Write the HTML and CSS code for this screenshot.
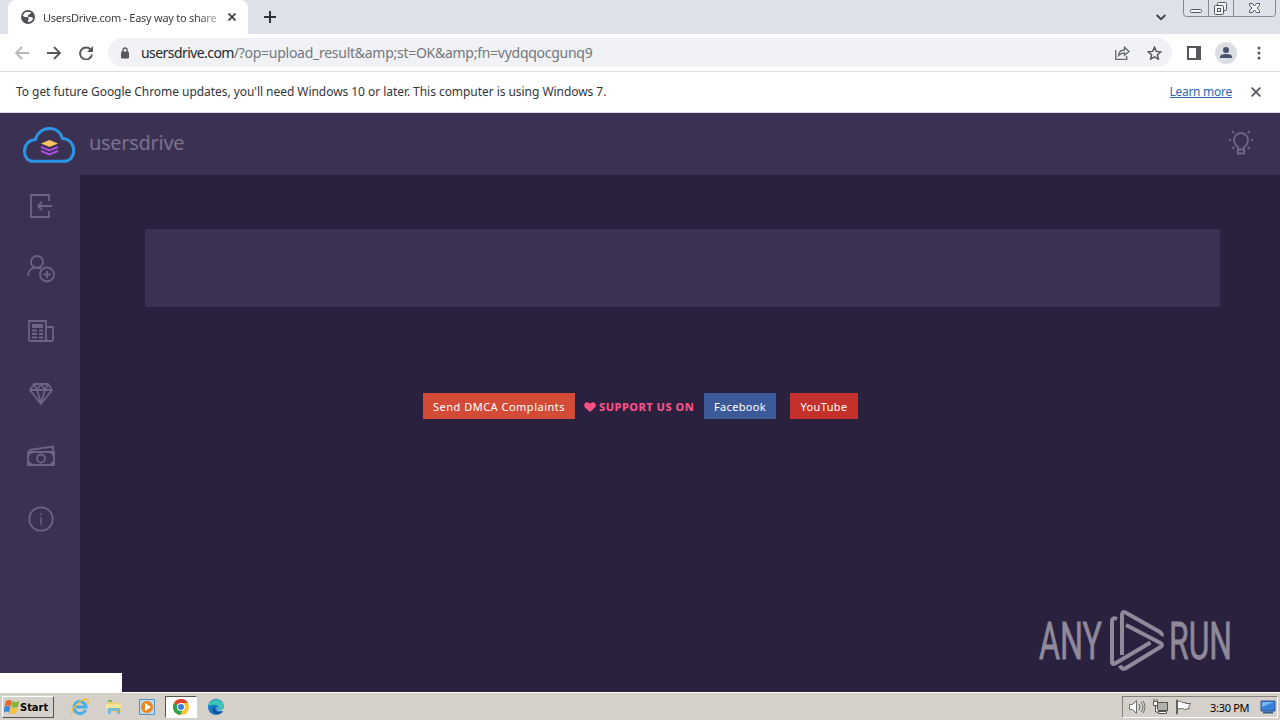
FILE: index.html
```html
<!DOCTYPE html>
<html lang="en">
<head>
  <meta charset="UTF-8" />
  <title>UsersDrive.com - Easy way to share</title>
  <link rel="stylesheet" href="styles.css">
</head>
<body>
  <div class="tabstrip">
    <div class="tab">
      <svg class="favicon" width="14" height="14" viewBox="0 0 14 14"><circle cx="7" cy="7" r="7" fill="#505357"/><path d="M6 2h4l-1 2-2 1v2H4l-2-1C2 4 4 2 6 2zM7 7h3l2 1c0 2-2 4-5 4v-2l1-1z" fill="#fff"/></svg>
      <span class="tab-title">UsersDrive.com - Easy way to share</span>
      <svg width="8" height="8" viewBox="0 0 8 8"><path d="M.5.5l7 7M7.500.5l-7 7" stroke="#3c4043" stroke-width="1.7"/></svg>
    </div>
    <svg class="new-tab" width="12" height="12" viewBox="0 0 12 12"><path d="M6 0v12M0 6h12" stroke="#2f3237" stroke-width="2"/></svg>
    <svg class="tab-search" width="10" height="7" viewBox="0 0 10 7"><path d="M.7 1L5 5.200 9.300 1" fill="none" stroke="#3c4043" stroke-width="1.800"/></svg>
    <div class="window-buttons">
      <svg width="93" height="17" viewBox="0 0 93 17" fill="none" stroke="#85888f">
        <path d="M.5 0v13.500q0 3 3 3h86q3 0 3-3V0M25.500 0v16M50.500 0v16"/>
        <g stroke="#55585e" fill="#f4f5f8"><rect x="7.500" y="9.500" width="11" height="3" rx="1"/><rect x="34.500" y="2.500" width="9" height="8" rx="1"/><rect x="31.500" y="5.500" width="9" height="9" rx="1"/><rect x="34.500" y="8.500" width="3" height="3"/><path d="M66.500 3.500h3l2 2.500 2-2.500h3v2l-2.500 2.500 2.500 2.500v2h-3l-2-2.500-2 2.500h-3v-2l2.500-2.500-2.500-2.500z"/></g>
      </svg>
    </div>
  </div>

  <div class="toolbar">
    <svg class="nav" width="14" height="14" viewBox="0 0 14 14"><path d="M14 7H1.500M7 1L1 7l6 6" fill="none" stroke="#b5b7ba" stroke-width="1.800"/></svg>
    <svg class="nav" width="14" height="14" viewBox="0 0 14 14"><path d="M0 7h12.500M7 1l6 6-6 6" fill="none" stroke="#55585d" stroke-width="1.800"/></svg>
    <svg class="nav" width="14" height="14" viewBox="0 0 14 14"><path d="M12 4A6 6 0 1 0 13 8.500" fill="none" stroke="#55585d" stroke-width="1.900"/><path d="M14 0v6H8z" fill="#55585d"/></svg>
    <div class="omnibox">
      <svg class="lock" width="8" height="12" viewBox="0 0 8 12"><path d="M2 5V3a2 2 0 0 1 4 0v2" fill="none" stroke="#55585d" stroke-width="1.400"/><rect y="4.500" width="8" height="7" rx="1" fill="#55585d"/></svg>
      <span class="url"><span class="host">usersdrive.com</span>/?op=upload_result&amp;amp;st=OK&amp;amp;fn=vydqqocgunq9</span>
      <svg class="share" width="15" height="14" viewBox="0 0 15 14" fill="none" stroke="#65686d" stroke-width="1.300"><path d="M.7 4v9.300h11V10"/><path d="M3.500 9.500c.5-4 3-5.500 6-5.500V1.200L14 5.500 9.500 9.300V7c-3 0-4.500 1-6 2.500z"/></svg>
      <svg class="star" width="15" height="14" viewBox="0 0 15 14"><path d="M7.500 1.200l1.800 4.200 4.500.4-3.400 3 1 4.300-3.900-2.300-3.900 2.300 1-4.300-3.400-3 4.500-.4z" fill="none" stroke="#55585d" stroke-width="1.500"/></svg>
    </div>
    <svg class="panel" width="14" height="14" viewBox="0 0 14 14"><path d="M0 0h14v14H0zM2 2v10h7V2z" fill="#55585d" fill-rule="evenodd"/></svg>
    <svg class="avatar" width="22" height="22" viewBox="0 0 22 22"><circle cx="11" cy="11" r="11" fill="#dadde2"/><circle cx="11" cy="8" r="3" fill="#49526b"/><path d="M5 16v-1.500q0-2.500 6-2.500t6 2.500V16z" fill="#49526b"/></svg>
    <svg class="menu" width="4" height="14" viewBox="0 0 4 14" fill="#55585d"><circle cx="2" cy="2" r="1.500"/><circle cx="2" cy="7" r="1.500"/><circle cx="2" cy="12" r="1.500"/></svg>
  </div>

  <div class="infobar">
    <span class="info-text">To get future Google Chrome updates, you'll need Windows 10 or later. This computer is using Windows 7.</span>
    <span class="learn-more">Learn more</span>
    <svg width="10" height="10" viewBox="0 0 10 10"><path d="M.7.7l8.600 8.600M9.300.7L.7 9.300" stroke="#55585d" stroke-width="1.800"/></svg>
  </div>

  <div class="page">
    <header class="header">
      <svg class="logo" width="54" height="38" viewBox="0 0 54 38">
        <path d="M11 35.300C6 35.300 2.500 31 2.500 25.500 2.500 19 6.500 14 13.500 13.500 15 7 20.500 2.500 27.500 2.500S39 7 40.500 12.500C48 13 51.700 18.500 51.700 24.500S48 35.300 42 35.300z" fill="none" stroke="#2d94e3" stroke-width="3"/>
        <path d="M27.500 14l8.500 3.500-8.500 3.500-8.500-3.500z" fill="#f9c560"/>
        <path d="M19 21l8.500 3.500L36 21M19 25l8.500 3.500L36 25" fill="none" stroke="#a950db" stroke-width="2"/>
      </svg>
      <span class="brand">usersdrive</span>
      <svg class="bulb" width="24" height="26" viewBox="0 0 24 26" fill="none" stroke="#716886" stroke-width="1.800">
        <path d="M9 19.500v-2.300C6.700 15.500 5 13.300 5 10a7 7 0 0 1 14 0c0 3.300-1.700 5.500-4 7.200v2.300z"/><path d="M8.800 19v4.500h6.400V19M3.200 1.200l2 2M20.800 1.200l-2 2M3.200 18.800l2-2M20.800 18.800l-2-2M0 10h2M22 10h2"/>
      </svg>
    </header>
    <div class="content">
      <nav class="sidebar">
        <div class="item"><svg width="22" height="24" viewBox="0 0 22 24"><path d="M19 7V1H1v22h18v-6M22 12H8M12 8l-4 4 4 4"/></svg></div>
        <div class="item"><svg width="28" height="28" viewBox="0 0 28 28"><circle cx="10" cy="7" r="6"/><path d="M1 21c0-5 3.500-8.500 8-8.500 2 0 3.500.4 5 1.500"/><circle cx="20" cy="19.500" r="7"/><path d="M20 16v7M16.500 19.500h7"/></svg></div>
        <div class="item"><svg width="26" height="22" viewBox="0 0 26 22"><path d="M18 18.500V1H1v18q0 2 2 2h20q2 0 2-2V7h-7M18 18q0 3 2.500 3"/><path d="M4 6h11" stroke-width="4"/><path d="M4 10.500h5M4 14h5M4 17.500h5M11 10.500h4M11 14h4M11 17.500h4"/></svg></div>
        <div class="item"><svg width="24" height="22" viewBox="0 0 24 22"><path d="M5 1h14l4 6-11 14L1 7zM1 7h22M5 1l3 6 4-6 4 6 3-6M8 7l4 13 4-13"/></svg></div>
        <div class="item"><svg width="28" height="22" viewBox="0 0 28 22"><path d="M1 7h26v13H1zM2 5L26 1.500V7"/><circle cx="14" cy="13.500" r="4"/><path d="M2 11V8h3M23 8h3v3M2 16v3h3M23 19h3v-3"/></svg></div>
        <div class="item"><svg width="26" height="26" viewBox="0 0 26 26"><circle cx="13" cy="13" r="11.700"/><path d="M13 7v2M13 11v8" stroke-width="1.300"/></svg></div>
      </nav>
      <main class="main">
        <div class="card"></div>
        <div class="footer">
          <span class="btn dmca">Send DMCA Complaints</span>
          <svg class="heart" width="12" height="10" viewBox="0 0 12 10"><path d="M6 10L1 5.500C-.8 3.500.5.3 3 .3 4.500.3 5.500 1 6 2 6.500 1 7.500.3 9 .3c2.500 0 3.800 3.200 2 5.200z" fill="#fa5085"/></svg>
          <span class="support">SUPPORT US ON</span>
          <span class="btn facebook">Facebook</span>
          <span class="btn youtube">YouTube</span>
        </div>
      </main>
    </div>
    <div class="status"></div>
    <svg class="watermark" width="200" height="64" viewBox="0 0 200 64">
      <g class="mark-text"><text x="1" y="50" textLength="63" lengthAdjust="spacingAndGlyphs">ANY</text><text x="131" y="50" textLength="63" lengthAdjust="spacingAndGlyphs">RUN</text></g>
      <g fill="none" stroke="#8f899a" stroke-width="4" stroke-linejoin="round"><path d="M79 10q-5-2-5 2v41q0 3 3 1.500l35.500-21"/><path d="M84 46V6q0-4 3.500-2.500L122 23q2.500 2 1.500 4"/><path d="M88 16l34.500 18q3 2 0 4L88 59q-4 2.500-6-2.500"/></g>
    </svg>
  </div>

  <div class="taskbar">
    <div class="start">
      <svg width="16" height="16" viewBox="0 0 16 16"><path d="M2 2q3-2 6 0L6.500 7.500Q4 5.500.5 7.500z" fill="#e9632d"/><path d="M8.500 2.300q3 1.500 7 0L13.700 8q-3 1.500-6.500-.3z" fill="#80b83b"/><path d="M.3 8q3-2 6 0L5 13.500q-3-2-5 0z" fill="#3c86d5"/><path d="M7 8.300q3 1.500 6.500.7L12 14.500q-3 1.500-6.500-.7z" fill="#f5c13c"/></svg>
      <span>Start</span>
    </div>
    <div class="launch">
      <svg width="18" height="18" viewBox="0 0 18 18"><path d="M14.500 12A6 6 0 1 1 15 9H5" fill="none" stroke="#46aee5" stroke-width="3"/><path d="M1 16C-1 11 13-2 17 2c1 1 0 3-1 4" fill="none" stroke="#eebb3d" stroke-width="1.500"/></svg>
      <svg width="18" height="18" viewBox="0 0 18 18"><path d="M2 3h5l1 2h8v9H2z" fill="#edcf6c"/><path d="M3 2h4v2H3z" fill="#78b95c"/><path d="M1 6h15v5H1z" fill="#f7e399"/><path d="M3 16v-6h12v6h-3v-3H6v3z" fill="#74b8dc"/></svg>
      <svg width="16" height="16" viewBox="0 0 16 16"><path d="M.5.5h15v15H.5z" fill="#b7daf1" stroke="#5992c2"/><circle cx="8" cy="8" r="6" fill="#ef8516"/><path d="M6 4l6 4-6 4z" fill="#fff"/></svg>
      <div class="active-app"><svg width="16" height="16" viewBox="0 0 16 16"><circle cx="8" cy="8" r="8" fill="#f6c52c"/><path d="M1 4a8 8 0 0 0 6 12l4-7-3-1z" fill="#2f9f50"/><path d="M1 4a8 8 0 0 1 14 0H8v4z" fill="#e04434"/><circle cx="8" cy="8" r="4" fill="#fff"/><circle cx="8" cy="8" r="3" fill="#3d7de5"/></svg></div>
      <svg width="16" height="16" viewBox="0 0 16 16"><circle cx="8" cy="8" r="8" fill="#1879c9"/><path d="M.3 7C1-1 16-2 16 8c0 3-5 4-6 2 2-3-2-6-9.700-3z" fill="#39c6b8"/><path d="M7 8c-1 5 4 6 8 4-2 4-9 4-10 0-.5-2 0-4 2-4z" fill="#0b5195"/><path d="M9 8c1 1 0 2 1 3 2 1 4 0 6-2v3h-4c-3 0-4-2-3-4z" fill="#d5d1ca"/></svg>
    </div>
    <div class="tray">
      <svg width="18" height="16" viewBox="0 0 18 16" fill="none" stroke="#707070"><path d="M1.500 5.500h3l4-4v13l-4-4h-3z" fill="#fff"/><path d="M11 5q2 3 0 6M13 3q4 5 0 10M15 2q4 6 0 12"/></svg>
      <svg width="17" height="16" viewBox="0 0 17 16" fill="#fff" stroke="#55534e"><rect x="5.500" y="3.500" width="10" height="8" fill="#b2b0ac"/><path d="M1.500 2.500h4v4h-4zM3.500 7v6h3M6.500 12.500h8v2h-8zM2 0v2M5 0v2"/></svg>
      <svg width="17" height="16" viewBox="0 0 17 16" fill="#fff" stroke="#65635f"><path d="M2.500 2.500c3-1 4 0 5 1h3v1h5l-2 3 1 2-5 1-2-1-5 .5zM1.500 1v14h1V1z"/></svg>
      <span class="clock">3:30 PM</span>
      <svg class="desktop" width="16" height="14" viewBox="0 0 16 14"><path d="M1 1h14v10H1z" fill="#397fd7" stroke="#285498"/><path d="M2 2h12L2 7z" fill="#78b6f1"/><path d="M3 12.500h10" stroke="#345b8a" stroke-width="2"/></svg>
    </div>
  </div>
</body>
</html>
```
FILE: styles.css
```css
* {
  box-sizing: border-box;
}

body {
  margin: 0;
  width: 1280px;
  height: 720px;
  display: flex;
  flex-direction: column;
  overflow: hidden;
  background: #fff;
  font-family: "Noto Sans", sans-serif;
  white-space: nowrap;
}

svg {
  display: block;
  flex-shrink: 0;
}

.tabstrip {
  height: 34px;
  display: flex;
  align-items: center;
  background: #dee1e9;
}

.tab {
  width: 240px;
  height: 34px;
  margin-left: 8px;
  padding: 0 12px 0 13px;
  display: flex;
  align-items: center;
  background: #fff;
  border-radius: 8px 8px 0 0;
}

.tab-title {
  width: 175px;
  margin: 0 10px 0 8px;
  overflow: hidden;
  font-size: 11px;
  letter-spacing: -0.27px;
  color: #3c4043;
  mask-image: linear-gradient(to right, #000 155px, transparent 185px);
}

.new-tab {
  margin-left: 16px;
}

.tab-search {
  margin-left: auto;
}

.window-buttons {
  height: 34px;
  margin: 0 4px 0 17px;
}

.toolbar {
  height: 38px;
  display: flex;
  align-items: center;
  padding: 0 19px 0 15px;
  border-bottom: 1px solid #dadce0;
}

.nav {
  margin-right: 18px;
}

.omnibox {
  width: 1064px;
  height: 29px;
  margin-left: -3px;
  padding: 0 10px 0 13px;
  display: flex;
  align-items: center;
  border-radius: 15px;
  background: #f0f2f5;
}

.url {
  margin-left: 12px;
  font-size: 14px;
  letter-spacing: -0.27px;
  color: #74777c;
}

.host {
  letter-spacing: -0.57px;
  color: #25272b;
}

.share {
  margin-left: auto;
}

.star {
  margin-left: 17px;
}

.panel {
  margin-left: 15px;
}

.avatar {
  margin-left: 14px;
}

.menu {
  margin-left: auto;
}

.infobar {
  height: 41px;
  display: flex;
  align-items: center;
  padding: 0 19px 1px 16px;
  border-bottom: 1px solid #dcd9e6;
  font-size: 12px;
  letter-spacing: -0.05px;
  color: #33353a;
}

.learn-more {
  margin: 0 19px 0 auto;
  letter-spacing: -0.27px;
  color: #2968b5;
  text-decoration: underline;
}

.page {
  position: relative;
  height: 579px;
  background: #2a213f;
}

.header {
  height: 62px;
  display: flex;
  align-items: center;
  padding: 0 27px 0 22px;
  background: #3b3153;
}

.logo {
  margin-top: 2px;
}

.brand {
  margin: 0 0 3px 13px;
  font-size: 20px;
  letter-spacing: -0.3px;
  color: #7b718e;
}

.bulb {
  margin: 0 0 2px auto;
}

.content {
  height: 517px;
  display: flex;
}

.sidebar {
  width: 80px;
  background: #3b3153;
}

.item {
  height: 62.5px;
  padding-left: 1px;
  display: flex;
  align-items: center;
  justify-content: center;
}

.item svg {
  fill: none;
  stroke: #6d6482;
  stroke-width: 1.8;
}

.main {
  flex: 1;
  padding: 54px 60px 0 65px;
}

.card {
  height: 78px;
  background: #3b3153;
}

.footer {
  display: flex;
  align-items: center;
  margin: 86px 0 0 278px;
  font-size: 11px;
}

.btn {
  height: 26px;
  display: flex;
  align-items: center;
  justify-content: center;
  letter-spacing: 0.35px;
  color: #fff;
}

.dmca {
  width: 152px;
  letter-spacing: 0.5px;
  background: #d34b36;
}

.heart {
  margin: 1px 3px 0 9px;
}

.support {
  width: 105px;
  font-weight: 800;
  letter-spacing: 0.5px;
  color: #f55286;
}

.facebook {
  width: 72px;
  background: #3c5999;
}

.youtube {
  width: 68px;
  margin-left: 14px;
  background: #c4302b;
}

.status {
  position: absolute;
  left: 0;
  bottom: 0;
  width: 122px;
  height: 19px;
  background: #fff;
}

.watermark {
  position: absolute;
  left: 1038px;
  top: 496px;
}

.mark-text {
  font-family: Roboto, sans-serif;
  font-size: 52px;
  fill: #8f899a;
  stroke: #8f899a;
  stroke-width: 0.8px;
}

.taskbar {
  height: 28px;
  display: flex;
  align-items: center;
  padding: 1px 2px 0;
  border-top: 1px solid #fff;
  background: #d5d1ca;
}

.start {
  width: 52px;
  height: 22px;
  display: flex;
  align-items: center;
  padding-left: 1px;
  border: 1px solid #fff;
  border-right-color: #55534e;
  border-bottom-color: #55534e;
  font: bold 11px "DejaVu Sans Condensed", "DejaVu Sans", sans-serif;
  color: #000;
}

.launch {
  display: flex;
  align-items: center;
  gap: 16px;
  margin-left: 17px;
}

.active-app {
  width: 32px;
  height: 22px;
  margin: 0 -5px 0 -6px;
  display: flex;
  align-items: center;
  justify-content: center;
  border: 1px solid #fff;
  border-top-color: #55534e;
  border-left-color: #55534e;
  background: #fff;
}

.tray {
  width: 156px;
  height: 22px;
  margin-left: auto;
  padding-left: 5px;
  display: flex;
  align-items: center;
  gap: 6px;
  border: 1px solid #fff;
  border-top-color: #85827c;
  border-left-color: #85827c;
}

.clock {
  margin-left: 12px;
  font-size: 11px;
  letter-spacing: -0.3px;
  color: #000;
}

.desktop {
  margin-left: 5px;
}
```
